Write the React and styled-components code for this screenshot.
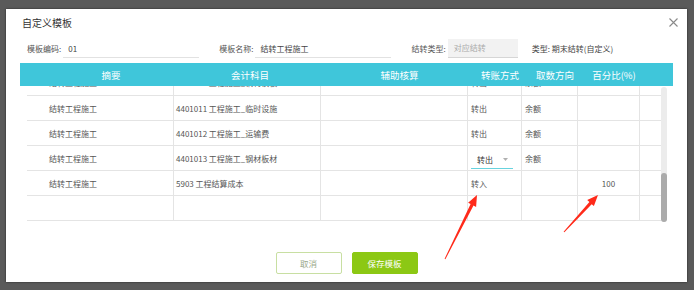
import React from "react";
import styled, { createGlobalStyle } from "styled-components";

const Global = createGlobalStyle`
  html, body { margin: 0; padding: 0; }
  body { font-family: "Noto Sans CJK SC", "Noto Sans", sans-serif; }
`;

const Page = styled.div`
  position: relative;
  width: 694px;
  height: 290px;
  box-sizing: border-box;
  background: #5a5a5a;
  padding: 9px 7px 8px 6px;
  overflow: hidden;
`;

const Dialog = styled.div`
  height: 100%;
  background: #fff;
  box-shadow: 0 0 2px rgba(0, 0, 0, 0.6);
  display: flex;
  flex-direction: column;
`;

const TitleBar = styled.div`
  height: 26px;
  display: flex;
  align-items: center;
  justify-content: space-between;
  padding: 0 9px 0 16px;
`;

const Title = styled.div`
  font-size: 10px;
  color: #333;
`;

const Close = styled.button`
  width: 10px;
  height: 10px;
  padding: 0;
  border: 0;
  background: none;
  display: flex;
  align-items: center;
  justify-content: center;
`;

const FormRow = styled.div`
  height: 26px;
  display: flex;
  align-items: center;
  padding-left: 21px;
  font-size: 8px;
  color: #555;
`;

const Field = styled.div`
  display: flex;
  align-items: center;
  margin-right: ${(p) => p.$gap || 0}px;
`;

const Label = styled.span`
  margin-right: 2px;
  white-space: nowrap;
`;

const LineInput = styled.div`
  width: ${(p) => p.$w}px;
  height: 19px;
  box-sizing: border-box;
  border-bottom: 1px solid #e2e2e2;
  display: flex;
  align-items: center;
  padding-left: 5px;
  color: #444;
  margin-top: 1px;
`;

const GrayInput = styled.div`
  width: 70px;
  height: 19px;
  box-sizing: border-box;
  background: #f2f2f2;
  border-bottom: 1px solid #d6d6d6;
  display: flex;
  align-items: center;
  padding-left: 6px;
  color: #aaa;
`;

const TypeText = styled.span`
  color: #444;
  white-space: nowrap;
`;

const TableWrap = styled.div`
  margin: 2px 14px 0 14px;
`;

const Header = styled.div`
  height: 23px;
  background: #3fc6da;
  display: grid;
  grid-template-columns: 159px 147px 147px 54px 56px 62px 1fr;
  align-items: center;
  color: #fff;
  font-size: 9.5px;
`;

const HeadCell = styled.div`
  text-align: center;
  white-space: nowrap;
  padding-left: ${(p) => p.$pl || 0}px;
  padding-right: ${(p) => p.$pr || 0}px;
`;

const Body = styled.div`
  margin: 0 6px 0 7px;
  height: 136px;
  display: flex;
`;

const Rows = styled.div`
  flex: 1;
  overflow: hidden;
`;

const ScrollTrack = styled.div`
  width: 6px;
  margin-top: 1px;
  background: #ececec;
  border-radius: 3px;
  display: flex;
  flex-direction: column;
  justify-content: flex-end;
`;

const ScrollThumb = styled.div`
  height: 49px;
  background: #ababab;
  border-radius: 3px;
`;

const Row = styled.div`
  height: ${(p) => p.$h || 25}px;
  box-sizing: border-box;
  border-bottom: 1px solid #e4e4e4;
  display: grid;
  grid-template-columns: 147px 147px 147px 54px 56px 62px 1fr;
  font-size: 8px;
  line-height: 11px;
  color: #555;
  overflow: hidden;
`;

const Cell = styled.div`
  display: flex;
  align-items: ${(p) => (p.$cut ? "flex-end" : "center")};
  padding-bottom: ${(p) => (p.$cut ? 7 : 0)}px;
  box-sizing: border-box;
  border-right: ${(p) => (p.$last ? "0" : "1px solid #e4e4e4")};
  padding-left: ${(p) => p.$pl ?? 2}px;
  justify-content: ${(p) => (p.$center ? "center" : "flex-start")};
  white-space: nowrap;
  overflow: hidden;
`;

const Select = styled.div`
  width: 42px;
  height: 18px;
  margin-top: 4px;
  box-sizing: border-box;
  border-bottom: 1px solid #68d3de;
  display: flex;
  align-items: center;
  justify-content: space-between;
  padding: 0 5px 0 6px;
  color: #333;
`;

const Footer = styled.div`
  display: flex;
  justify-content: center;
  gap: 10px;
  margin-top: 30px;
`;

const Btn = styled.button`
  width: 66px;
  height: 22px;
  box-sizing: border-box;
  border-radius: 2px;
  font-family: inherit;
  font-size: 8.5px;
  padding: 0;
  cursor: pointer;
  border: 1px solid ${(p) => (p.$primary ? "#8cc814" : "#c8dfa2")};
  background: ${(p) => (p.$primary ? "#8cc814" : "#fff")};
  color: ${(p) => (p.$primary ? "#fff" : "#9aa98a")};
`;

const Annot = styled.svg`
  position: absolute;
  left: 0;
  top: 0;
  pointer-events: none;
`;

function arrow(x1, y1, x2, y2) {
  const dx = x2 - x1, dy = y2 - y1;
  const len = Math.hypot(dx, dy);
  const ux = dx / len, uy = dy / len;
  const nx = -uy, ny = ux;
  const hl = 11, hw = 4.5;
  const bx = x2 - ux * hl, by = y2 - uy * hl;
  const pts = [
    [x1 + nx * 0.5, y1 + ny * 0.5],
    [bx + nx * 1.6, by + ny * 1.6],
    [bx + nx * hw, by + ny * hw],
    [x2, y2],
    [bx - nx * hw, by - ny * hw],
    [bx - nx * 1.6, by - ny * 1.6],
    [x1 - nx * 0.5, y1 - ny * 0.5],
  ];
  return pts.map((p) => p.map((v) => v.toFixed(1)).join(",")).join(" ");
}

const rows = [
  { a: "结转工程施工", b: "4401010 工程施工_钢材模板", c: "转出", d: "余额", cut: true },
  { a: "结转工程施工", b: "4401011 工程施工_临时设施", c: "转出", d: "余额" },
  { a: "结转工程施工", b: "4401012 工程施工_运输费", c: "转出", d: "余额" },
  { a: "结转工程施工", b: "4401013 工程施工_钢材板材", c: "转出", d: "余额", select: true },
  { a: "结转工程施工", b: "5903 工程结算成本", c: "转入", d: "", e: "100" },
  { a: "", b: "", c: "", d: "" },
];

export default function App() {
  return (
    <Page>
      <Global />
      <Dialog>
        <TitleBar>
          <Title>自定义模板</Title>
          <Close aria-label="关闭">
            <svg width="9" height="9" viewBox="0 0 9 9">
              <path d="M0.5 0.5 L8.5 8.5 M8.5 0.5 L0.5 8.5" stroke="#8a8a8a" strokeWidth="1.1" />
            </svg>
          </Close>
        </TitleBar>
        <FormRow>
          <Field $gap={20}>
            <Label>模板编码:</Label>
            <LineInput $w={136}>01</LineInput>
          </Field>
          <Field $gap={20}>
            <Label>模板名称:</Label>
            <LineInput $w={136}>结转工程施工</LineInput>
          </Field>
          <Field $gap={14}>
            <Label>结转类型:</Label>
            <GrayInput>对应结转</GrayInput>
          </Field>
          <TypeText>类型: 期末结转(自定义)</TypeText>
        </FormRow>
        <TableWrap>
          <Header>
            <HeadCell $pl={23}>摘要</HeadCell>
            <HeadCell $pr={5}>会计科目</HeadCell>
            <HeadCell>辅助核算</HeadCell>
            <HeadCell>转账方式</HeadCell>
            <HeadCell>取数方向</HeadCell>
            <HeadCell>百分比(%)</HeadCell>
            <HeadCell />
          </Header>
          <Body>
            <Rows>
              {rows.map((r, i) => (
                <Row key={i} $h={r.cut ? 10 : 25}>
                  <Cell $cut={r.cut} $pl={22}>{r.a}</Cell>
                  <Cell $cut={r.cut}>{r.b}</Cell>
                  <Cell $cut={r.cut} />
                  <Cell $cut={r.cut} $pl={3}>
                    {r.select ? (
                      <Select>
                        <span>{r.c}</span>
                        <svg width="5" height="3" viewBox="0 0 5 3">
                          <path d="M0 0 L5 0 L2.5 3 Z" fill="#b0b0b0" />
                        </svg>
                      </Select>
                    ) : (
                      r.c
                    )}
                  </Cell>
                  <Cell $cut={r.cut} $pl={3}>{r.d}</Cell>
                  <Cell $cut={r.cut} $center $pl={0}>{r.e || ""}</Cell>
                  <Cell $cut={r.cut} $last />
                </Row>
              ))}
            </Rows>
            <ScrollTrack>
              <ScrollThumb />
            </ScrollTrack>
          </Body>
        </TableWrap>
        <Footer>
          <Btn>取消</Btn>
          <Btn $primary>保存模板</Btn>
        </Footer>
      </Dialog>
      <Annot width="694" height="290" viewBox="0 0 694 290">
        <polygon points={arrow(445, 259, 477, 195)} fill="#ff2a1a" />
        <polygon points={arrow(564, 232, 598, 195)} fill="#ff2a1a" />
      </Annot>
    </Page>
  );
}
